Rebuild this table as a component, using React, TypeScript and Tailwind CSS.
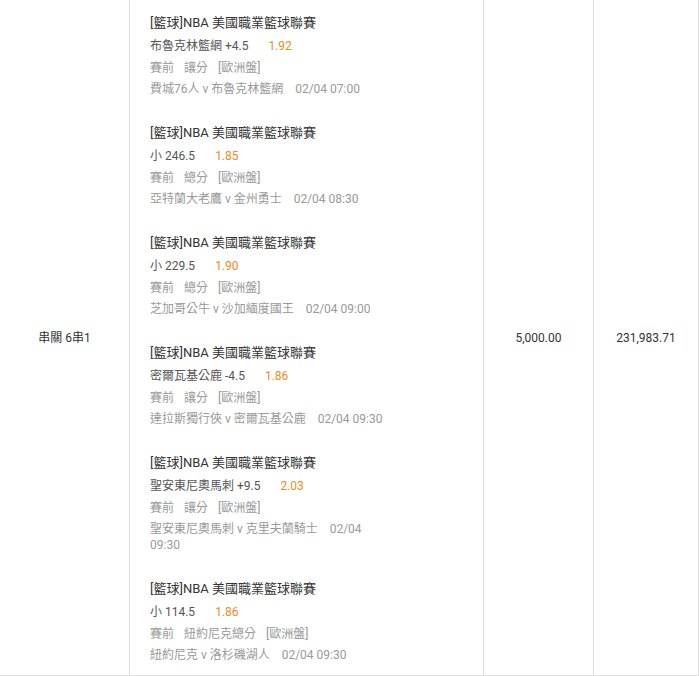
import React from 'react';

type Leg = {
  pick: string;
  odds: string;
  tags: string[];
  teams: string;
  time: string;
};

const legs: Leg[] = [
  { pick: '布魯克林籃網 +4.5', odds: '1.92', tags: ['賽前', '讓分', '[歐洲盤]'], teams: '費城76人 v 布魯克林籃網', time: '02/04 07:00' },
  { pick: '小 246.5', odds: '1.85', tags: ['賽前', '總分', '[歐洲盤]'], teams: '亞特蘭大老鷹 v 金州勇士', time: '02/04 08:30' },
  { pick: '小 229.5', odds: '1.90', tags: ['賽前', '總分', '[歐洲盤]'], teams: '芝加哥公牛 v 沙加緬度國王', time: '02/04 09:00' },
  { pick: '密爾瓦基公鹿 -4.5', odds: '1.86', tags: ['賽前', '讓分', '[歐洲盤]'], teams: '達拉斯獨行俠 v 密爾瓦基公鹿', time: '02/04 09:30' },
  { pick: '聖安東尼奧馬刺 +9.5', odds: '2.03', tags: ['賽前', '讓分', '[歐洲盤]'], teams: '聖安東尼奧馬刺 v 克里夫蘭騎士', time: '02/04 09:30' },
  { pick: '小 114.5', odds: '1.86', tags: ['賽前', '紐約尼克總分', '[歐洲盤]'], teams: '紐約尼克 v 洛杉磯湖人', time: '02/04 09:30' },
];

function LegRow({ leg }: { leg: Leg }) {
  return (
    <div className="pl-5 pt-[13px] pb-[13px] last:pb-[12px]">
      <div className="w-[240px]">
        <div className="text-[13px] leading-[20px] text-[#333]">[籃球]NBA 美國職業籃球聯賽</div>
        <div className="mt-[5px] text-[12px] leading-[16px] text-[#555]">
          {leg.pick}
          <span className="ml-5 text-[#f08a24]">{leg.odds}</span>
        </div>
        <div className="mt-[6px] text-[12px] leading-[16px] text-[#999]">
          {leg.tags.map((t) => (
            <span key={t} className="mr-[10px]">{t}</span>
          ))}
        </div>
        <div className="mt-[5px] text-[12px] leading-[16px] text-[#999]">
          {`${leg.teams}\u00a0\u00a0\u00a0\u00a0${leg.time}`}
        </div>
      </div>
    </div>
  );
}

export default function App() {
  return (
    <div
      className="flex w-[699px] bg-white border-b border-[#ddd]"
      style={{ fontFamily: 'Roboto, "Noto Sans CJK TC", sans-serif' }}
    >
      <div className="w-[130px] shrink-0 border-r border-[#ddd] flex items-center justify-center text-[12px] text-[#333]">
        串關 6串1
      </div>
      <div className="w-[354px] shrink-0 border-r border-[#ddd]">
        {legs.map((leg, i) => (
          <LegRow key={i} leg={leg} />
        ))}
      </div>
      <div className="w-[110px] shrink-0 border-r border-[#ddd] flex items-center justify-center text-[12px] text-[#333]">
        5,000.00
      </div>
      <div className="w-[105px] shrink-0 border-r border-[#ddd] flex items-center justify-center text-[12px] text-[#333]">
        231,983.71
      </div>
    </div>
  );
}
